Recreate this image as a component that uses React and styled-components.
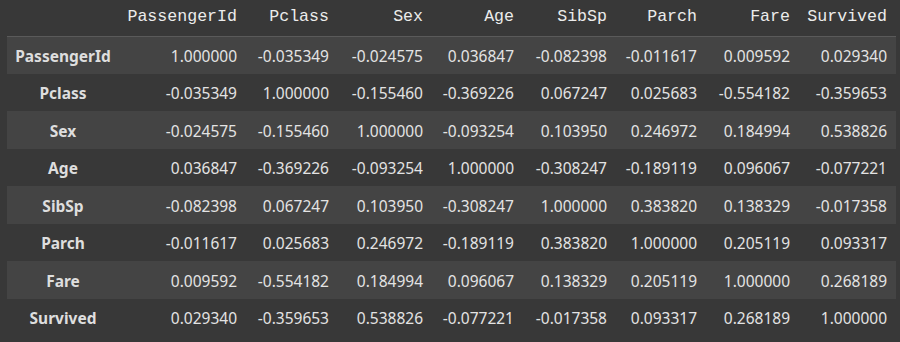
import React from "react";
import styled, { createGlobalStyle } from "styled-components";

const GlobalStyle = createGlobalStyle`
  html, body {
    margin: 0;
    padding: 0;
    background: #383838;
  }
`;

const Wrap = styled.div`
  padding: 0 0 0 7px;
`;

const Table = styled.table`
  border-collapse: collapse;
  border-spacing: 0;
  table-layout: fixed;
  width: 889px;
  color: #e3e3e3;
  font-family: "Noto Sans", "Open Sans", sans-serif;
  font-size: 15.5px;
`;

const HeadRow = styled.tr`
  height: 36px;
  border-bottom: 1px solid #5a5a5a;
`;

const HeadCell = styled.th`
  padding: 0 9px 3px 0;
  text-align: right;
  font-family: "Liberation Mono", "DejaVu Sans Mono", monospace;
  font-size: 16.6px;
  font-weight: normal;
  color: #ececec;
  white-space: nowrap;
`;

const Row = styled.tr`
  height: 37.5px;
  background: ${(p) => (p.$striped ? "#444444" : "transparent")};
`;

const IndexCell = styled.th`
  padding: 2px 0 0 0;
  text-align: center;
  font-weight: bold;
  color: #dedede;
  white-space: nowrap;
`;

const Cell = styled.td`
  padding: 2px 9px 0 0;
  text-align: right;
  white-space: nowrap;
`;

const columns = ["PassengerId", "Pclass", "Sex", "Age", "SibSp", "Parch", "Fare", "Survived"];
const widths = [112, 127, 92, 94, 91, 93, 90, 93, 97];

const data = [
  ["1.000000", "-0.035349", "-0.024575", "0.036847", "-0.082398", "-0.011617", "0.009592", "0.029340"],
  ["-0.035349", "1.000000", "-0.155460", "-0.369226", "0.067247", "0.025683", "-0.554182", "-0.359653"],
  ["-0.024575", "-0.155460", "1.000000", "-0.093254", "0.103950", "0.246972", "0.184994", "0.538826"],
  ["0.036847", "-0.369226", "-0.093254", "1.000000", "-0.308247", "-0.189119", "0.096067", "-0.077221"],
  ["-0.082398", "0.067247", "0.103950", "-0.308247", "1.000000", "0.383820", "0.138329", "-0.017358"],
  ["-0.011617", "0.025683", "0.246972", "-0.189119", "0.383820", "1.000000", "0.205119", "0.093317"],
  ["0.009592", "-0.554182", "0.184994", "0.096067", "0.138329", "0.205119", "1.000000", "0.268189"],
  ["0.029340", "-0.359653", "0.538826", "-0.077221", "-0.017358", "0.093317", "0.268189", "1.000000"],
];

export default function App() {
  return (
    <Wrap>
      <GlobalStyle />
      <Table>
        <colgroup>
          {widths.map((w, i) => (
            <col key={i} style={{ width: w }} />
          ))}
        </colgroup>
        <thead>
          <HeadRow>
            <HeadCell />
            {columns.map((c) => (
              <HeadCell key={c}>{c}</HeadCell>
            ))}
          </HeadRow>
        </thead>
        <tbody>
          {data.map((row, i) => (
            <Row key={columns[i]} $striped={i % 2 === 0}>
              <IndexCell>{columns[i]}</IndexCell>
              {row.map((v, j) => (
                <Cell key={j}>{v}</Cell>
              ))}
            </Row>
          ))}
        </tbody>
      </Table>
    </Wrap>
  );
}
